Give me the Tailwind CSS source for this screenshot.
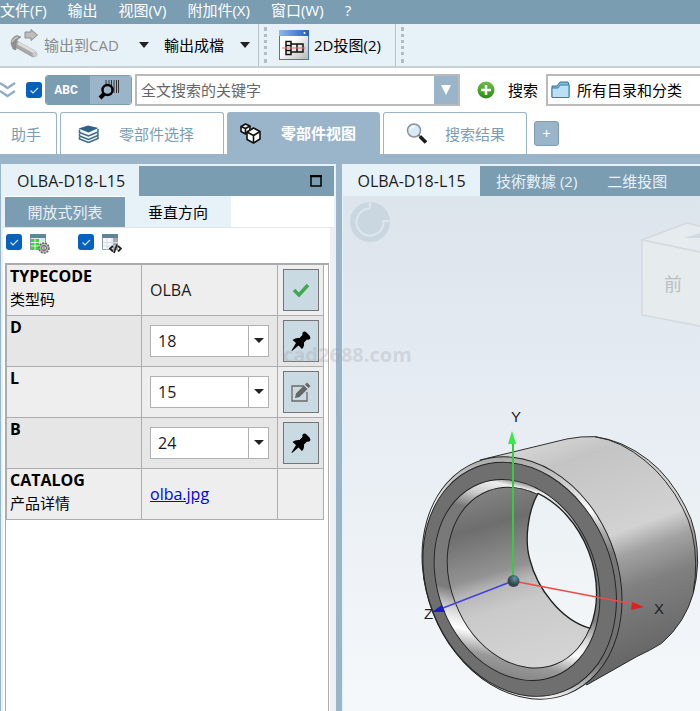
<!DOCTYPE html>
<html lang="zh-CN">
<head>
  <meta charset="UTF-8" />
  <meta name="viewport" content="width=device-width, initial-scale=1.0" />
  <title>OLBA-D18-L15</title>
  <script src="https://cdn.jsdelivr.net/npm/@tailwindcss/browser@4"></script>
</head>
<body class="relative flex min-h-screen flex-col overflow-x-hidden bg-white font-['Open_Sans','Noto_Sans_CJK_SC',sans-serif] text-[15px] leading-5 text-[#1c1c1c]">

  <!-- Menu bar -->
  <nav class="flex h-6 shrink-0 gap-[21px] bg-[#7b9db2] pb-1 whitespace-nowrap text-white">
    <button>文件(F)</button>
    <button>输出</button>
    <button>视图(V)</button>
    <button>附加件(X)</button>
    <button>窗口(W)</button>
    <button>?</button>
  </nav>

  <!-- Toolbar -->
  <div class="flex h-11 shrink-0 items-center border-b-2 border-[#c5d1d5] bg-[#e7f2f8] whitespace-nowrap">
    <button class="flex w-[131px] items-center gap-1 pl-2 text-[#8a8a8a]">
      <svg class="h-8 w-8 shrink-0" viewBox="0 0 32 32">
        <path d="M9 12 L27 22 Q30 24 28 27 Q26 29 23 27 L7 18z" fill="#a9a9a9" stroke="#8c8c8c" stroke-width=".6" />
        <path d="M10 14 L27 23.500" stroke="#dedede" stroke-width="3" />
        <ellipse cx="27" cy="25.500" rx="2.500" ry="2.500" fill="#c9c9c9" />
        <path d="M3 15 Q3 8 9 6.500 L13 8 Q7 11 8 17 L8 21 L5 20z" fill="#8f8f8f" stroke="#858585" stroke-width=".6" />
        <path d="M4 13 Q6 9 10 8" stroke="#c8c8c8" stroke-width="1.500" fill="none" />
        <path d="M17 3h6V.500l6.500 5.500-6.500 5.500V9h-6z" fill="#bdbdbd" stroke="#8d8d8d" />
      </svg>
      输出到CAD
    </button>
    <button class="px-2" aria-label="输出到CAD 选项"><svg class="h-[6px] w-[10px]" viewBox="0 0 10 6"><path d="M0 0h10L5 6z" fill="#222" /></svg></button>
    <button class="pl-[7px] text-black">輸出成檔</button>
    <button class="px-4" aria-label="輸出成檔 選項"><svg class="h-[6px] w-[10px]" viewBox="0 0 10 6"><path d="M0 0h10L5 6z" fill="#222" /></svg></button>
    <div class="-ml-2 h-full border-l border-[#b9c4ca]"></div>
    <div class="ml-[5px] h-9 w-[3px] border-l-[3px] border-dotted border-[#b4bcc1]"></div>
    <button class="ml-3 flex items-center gap-[5px] text-black">
      <svg class="h-[30px] w-[30px]" viewBox="0 0 30 30">
        <defs>
          <linearGradient id="win" x1="0" y1="0" x2="1" y2="1"><stop offset=".4" stop-color="#fff" /><stop offset="1" stop-color="#b5b5b5" /></linearGradient>
          <linearGradient id="bar"><stop offset="0" stop-color="#8fb8ee" /><stop offset="1" stop-color="#1f62c0" /></linearGradient>
        </defs>
        <rect x=".5" y=".5" width="29" height="29" fill="url(#win)" stroke="#4678b8" />
        <rect x="0" y="0" width="30" height="6" fill="url(#bar)" />
        <circle cx="25.500" cy="3" r="1" fill="#fff" />
        <path d="M7 11.500h5v13H7zM7 15.500h5M7 20.500h5M12 14h12v8H12M18 14v8" fill="none" stroke="#111" stroke-width="1.500" />
        <path d="M3 18h23" stroke="#e46a6a" stroke-width="1" />
      </svg>
      <span>2D投图(2)</span>
    </button>
    <div class="ml-[14px] h-full border-l border-[#b9c4ca]"></div>
    <div class="ml-[5px] h-9 w-[3px] border-l-[3px] border-dotted border-[#b4bcc1]"></div>
  </div>

  <!-- Search row -->
  <div class="flex h-11 shrink-0 items-center whitespace-nowrap">
    <button class="w-[26px] shrink-0" aria-label="展开">
      <svg class="h-4 w-4" viewBox="0 0 16 16" fill="none" stroke="#8fb0c6" stroke-width="2.500"><path d="M0 1l7.500 5L15 1M0 9l7.500 5L15 9" /></svg>
    </button>
    <label class="relative h-4 w-4 shrink-0">
      <input type="checkbox" checked aria-label="全文搜索" class="block h-4 w-4 appearance-none rounded-[3px] bg-[#0660bd]" />
      <svg class="pointer-events-none absolute inset-0 h-4 w-4" viewBox="0 0 16 16"><path d="M4.500 8.500l2.500 2.500 5-5" fill="none" stroke="#d5e6f7" stroke-width="1.200" /></svg>
    </label>
    <div class="ml-[3px] flex h-[30px] w-[87px] shrink-0 overflow-hidden rounded-[3px] border border-[#7b9db2]">
      <button class="w-11 bg-[#7b9db2] pr-1 font-['Liberation_Sans_Narrow','Roboto',sans-serif] text-xs font-bold text-white">ABC</button>
      <button class="flex flex-1 items-center justify-center bg-[#9ab4ca] pr-1" aria-label="条码搜索">
        <svg class="h-6 w-6" viewBox="0 0 24 24" fill="none">
          <path d="M9 2v8M12 2v13M14.500 2v13M17 2v13M19.500 2v13M21.500 2v13" stroke="#333" stroke-width="1" />
          <circle cx="10.500" cy="12" r="5" fill="#9ab4ca" stroke="#000" stroke-width="2.500" />
          <path d="M7 16l-4 4" stroke="#000" stroke-width="4" />
        </svg>
      </button>
    </div>
    <div class="ml-[3px] flex h-8 w-[325px] shrink-0 border-2 border-[#bababa]">
      <input type="text" aria-label="全文搜索的关键字" placeholder="全文搜索的关键字" class="min-w-0 flex-1 px-1 text-[#555] placeholder:text-[#666] focus:outline-none" />
      <button class="flex w-6 items-center justify-center bg-[#9ab4ca]" aria-label="历史"><svg class="h-[10px] w-[10px]" viewBox="0 0 10 10"><path d="M0 0h10L5 10z" fill="#fff" /></svg></button>
    </div>
    <button class="ml-[17px] flex shrink-0 items-center gap-[13px] text-black">
      <svg class="h-[18px] w-[18px]" viewBox="0 0 18 18">
        <defs><linearGradient id="plus" x2="0" y2="1"><stop offset="0" stop-color="#6dc04a" /><stop offset="1" stop-color="#2b8a16" /></linearGradient></defs>
        <circle cx="9" cy="9" r="8.500" fill="url(#plus)" /><path d="M9 4v10M4 9h10" stroke="#fff" stroke-width="2.500" />
      </svg>
      搜索
    </button>
    <button class="ml-2 flex h-8 flex-1 items-center gap-[7px] border-2 border-r-0 border-[#bababa] pl-[3px] text-black">
      <svg class="h-[18px] w-[19px] shrink-0" viewBox="0 0 19 18">
        <path d="M1 16V5h5l3-4h8l1 3v12z" fill="#7fbfe0" stroke="#2f7299" />
        <path d="M1 7h6l2-3h9v12.500H1z" fill="#b9e0f3" stroke="#3480a8" />
      </svg>
      所有目录和分类
    </button>
  </div>

  <!-- Main tabs -->
  <div class="flex h-[42px] shrink-0 items-stretch gap-[3px] whitespace-nowrap text-[#7b9db2]">
    <button class="w-[57px] rounded-tr-[3px] border-t border-r border-[#9ab4ca] pr-1">助手</button>
    <button class="flex w-[164px] items-center gap-5 rounded-t-[3px] border border-b-0 border-[#9ab4ca] pl-[17px]">
      <svg class="h-[18px] w-[21px]" viewBox="0 0 21 18">
        <path d="M1.500 4.500v3l9 3.500 9.500-4v-3M1.500 8.500v2.500l9 3.500 9.500-4V8M1.500 12v2l9 3.500 9.500-4v-2" fill="#f2f7fa" stroke="#3e6b87" stroke-width="1.500" />
        <path d="M.500 3.500L10 .500l10.500 2.500-10 4.500z" fill="#2f6284" />
      </svg>
      <span>零部件选择</span>
    </button>
    <button class="flex w-[153px] items-center gap-5 rounded-t-[3px] bg-[#9ab4ca] pl-[13px] font-bold text-white">
      <svg class="h-[21px] w-[21px]" viewBox="0 0 21 21" stroke="#111" stroke-width="1.600" stroke-linejoin="round">
        <path d="M1 3.500L5.500 1 10 3v5l-4.500 3L1 8.500z" fill="#eee" /><path d="M1 3.500l4.500 2L10 3M5.500 5.500V11" fill="none" />
        <path d="M7 9l6.500-4L20 8.500v7.500l-6.500 4L7 16.500z" fill="#fff" /><path d="M7 9l6.500 3.500L20 8.500M13.500 12.500V20" fill="none" />
      </svg>
      <span>零部件视图</span>
    </button>
    <button class="flex w-36 items-center gap-[18px] rounded-t-[3px] border border-b-0 border-[#9ab4ca] pl-[22px]">
      <svg class="h-[21px] w-[21px]" viewBox="0 0 21 21">
        <circle cx="8" cy="7.500" r="6.500" fill="#d6eaf8" stroke="#8d9398" stroke-width="1.500" />
        <path d="M4.500 7a4 4 0 0 1 4-3.500" fill="none" stroke="#fff" stroke-width="1.500" />
        <path d="M12.500 12l2 2" stroke="#777" stroke-width="2" /><path d="M14 13.500l6 6" stroke="#1b1b1b" stroke-width="3.500" />
      </svg>
      <span>搜索结果</span>
    </button>
    <button class="ml-1 flex h-[25px] w-[25px] items-center justify-center self-center rounded-[3px] border border-[#7b9db2] bg-[#9ab4ca] text-white" aria-label="新建标签">+</button>
  </div>

  <!-- Panels -->
  <main class="flex flex-1 gap-[6px] bg-[#9ab4ca] pt-[10px] pl-px">

    <section class="flex w-[335px] shrink-0 flex-col border-x-2 border-t-2 border-[#e7f2f8] bg-white">
      <div class="flex h-[30px] items-stretch bg-[#7b9db2]">
        <h2 class="w-[136px] bg-[#e7f2f8] pl-[14px] text-base leading-[30px]">OLBA-D18-L15</h2>
        <button class="mr-3 ml-auto" aria-label="最大化"><svg class="h-3 w-3" viewBox="0 0 12 12"><path d="M1 1.500h10V11H1z" fill="none" stroke="#000" stroke-width="1.500" /><path d="M0 1h12" stroke="#000" stroke-width="2" /></svg></button>
      </div>
      <div class="flex h-8 border-b border-[#e5e5e5]">
        <button class="mt-px w-[122px] border-l-2 border-[#e7f2f8] bg-[#7b9db2] text-[#e7f2f8]">開放式列表</button>
        <button class="w-[106px] bg-[#e7f2f8] text-black">垂直方向</button>
      </div>

      <div class="flex flex-1 flex-col border-r-4 border-[#f0f0f0]">
        <div class="flex h-[35px] items-start gap-2 pt-[6px] pl-[3px]">
          <label class="relative h-4 w-4">
            <input type="checkbox" checked aria-label="表格设置" class="block h-4 w-4 appearance-none rounded-[3px] bg-[#0660bd]" />
            <svg class="pointer-events-none absolute inset-0 h-4 w-4" viewBox="0 0 16 16"><path d="M4.500 8.500l2.500 2.500 5-5" fill="none" stroke="#d5e6f7" stroke-width="1.200" /></svg>
          </label>
          <svg class="h-5 w-5" viewBox="0 0 20 20">
            <path d="M.500.500h15v15H.500z" fill="#dfe7eb" stroke="#8499a5" /><path d="M0 0h16v4H0z" fill="#5f8598" />
            <path d="M1 5h8v10H1z" fill="#2fdc2f" /><path d="M5 4v12M9.500 4v12M1 8.500h15M1 12h15" stroke="#e6efe6" />
            <circle cx="14" cy="14" r="5" fill="#b5b5b5" stroke="#666" stroke-width="1.500" stroke-dasharray="2 1" /><circle cx="14" cy="14" r="2.500" fill="#ddd" stroke="#666" /><path d="M14 12v4" stroke="#666" />
          </svg>
          <label class="relative ml-5 h-4 w-4">
            <input type="checkbox" checked aria-label="表格代码" class="block h-4 w-4 appearance-none rounded-[3px] bg-[#0660bd]" />
            <svg class="pointer-events-none absolute inset-0 h-4 w-4" viewBox="0 0 16 16"><path d="M4.500 8.500l2.500 2.500 5-5" fill="none" stroke="#d5e6f7" stroke-width="1.200" /></svg>
          </label>
          <svg class="h-5 w-5" viewBox="0 0 20 20">
            <path d="M.500.500h15v15H.500z" fill="#f6fafc" stroke="#8a9ba6" /><path d="M0 0h16v4H0z" fill="#5f8598" />
            <path d="M11 4h4.500v11.500H11z" fill="#aaa" /><path d="M5 4v12M10 4v12M1 8.500h15M1 12h15" stroke="#cfdfe8" />
            <path d="M11 12l-3 2.500 3 3M16 12l3 2.500-3 3M15 10.500l-3 8.500" fill="none" stroke="#222" stroke-width="1.800" />
          </svg>
        </div>

        <div class="mr-px ml-[2px] flex-1 border-2 border-r border-b-0 border-l border-[#ababab]">
          <table class="w-[317px] table-fixed border-collapse text-base">
            <colgroup><col class="w-[135px]" /><col class="w-[136px]" /><col class="w-[46px]" /></colgroup>
            <tbody>
              <tr class="h-[50px] bg-[#eeeeee]">
                <th class="border border-t-0 border-[#adadad] p-0 pl-[3px] text-left align-top text-[15px] leading-[23px] font-bold text-black"><span class="text-base leading-[23px]">TYPECODE</span><br /><span class="font-normal">类型码</span></th>
                <td class="border border-t-0 border-[#adadad] p-0 pl-2">OLBA</td>
                <td class="border border-t-0 border-[#adadad] p-0">
                  <button class="mx-auto flex h-[42px] w-9 items-center justify-center border border-[#757575] bg-[#c9dae3]" aria-label="确定">
                    <svg class="h-4 w-[18px]" viewBox="0 0 18 16"><path d="M2 8l5 5 9-10" fill="none" stroke="#3fa94f" stroke-width="3.500" /></svg>
                  </button>
                </td>
              </tr>
              <tr class="h-[51px] bg-[#e6e6e6]">
                <th class="border border-[#adadad] p-0 pl-[3px] text-left align-top leading-[23px] font-bold text-black"><label for="d">D</label></th>
                <td class="border border-[#adadad] p-0 px-2">
                  <div class="relative">
                    <select id="d" class="block h-8 w-full appearance-none border border-[#b0b0b0] bg-white pl-[7px]"><option>18</option></select>
                    <span class="pointer-events-none absolute inset-y-0 right-0 flex w-[21px] items-center justify-center border border-[#b0b0b0]"><svg class="h-[5px] w-[10px]" viewBox="0 0 10 5"><path d="M0 0h10L5 5z" fill="#222" /></svg></span>
                  </div>
                </td>
                <td class="border border-[#adadad] p-0">
                  <button class="mx-auto flex h-[42px] w-9 items-center justify-center border border-[#757575] bg-[#c9dae3]" aria-label="固定 D">
                    <svg class="h-5 w-5" viewBox="0 0 20 20"><path d="M12 1q2-1 3.500.500l3 3q1.500 2 .500 3.500-1.500 1-3 .500l-3 3q.500 4-2 6.500l-3.500-3.500L1 20l-.500-.500L5 12 1.500 9Q4.500 6.500 8.500 7l3-3Q11 2 12 1z" fill="#000" /></svg>
                  </button>
                </td>
              </tr>
              <tr class="h-[51px] bg-[#eeeeee]">
                <th class="border border-[#adadad] p-0 pl-[3px] text-left align-top leading-[23px] font-bold text-black"><label for="l">L</label></th>
                <td class="border border-[#adadad] p-0 px-2">
                  <div class="relative">
                    <select id="l" class="block h-8 w-full appearance-none border border-[#b0b0b0] bg-white pl-[7px]"><option>15</option></select>
                    <span class="pointer-events-none absolute inset-y-0 right-0 flex w-[21px] items-center justify-center border border-[#b0b0b0]"><svg class="h-[5px] w-[10px]" viewBox="0 0 10 5"><path d="M0 0h10L5 5z" fill="#222" /></svg></span>
                  </div>
                </td>
                <td class="border border-[#adadad] p-0">
                  <button class="mx-auto flex h-[42px] w-9 items-center justify-center border border-[#757575] bg-[#c9dae3]" aria-label="编辑 L">
                    <svg class="h-5 w-5" viewBox="0 0 20 20"><path d="M13 4H1v15h15V10" fill="none" stroke="#6a6a6a" stroke-width="1.300" /><path d="M4 16l1-4.500L13 3.500l3.500 3.500-8 8zM14 2.500L16 .500 19.500 4l-2 2z" fill="#666" /></svg>
                  </button>
                </td>
              </tr>
              <tr class="h-[51px] bg-[#e6e6e6]">
                <th class="border border-[#adadad] p-0 pl-[3px] text-left align-top leading-[23px] font-bold text-black"><label for="b">B</label></th>
                <td class="border border-[#adadad] p-0 px-2">
                  <div class="relative">
                    <select id="b" class="block h-8 w-full appearance-none border border-[#b0b0b0] bg-white pl-[7px]"><option>24</option></select>
                    <span class="pointer-events-none absolute inset-y-0 right-0 flex w-[21px] items-center justify-center border border-[#b0b0b0]"><svg class="h-[5px] w-[10px]" viewBox="0 0 10 5"><path d="M0 0h10L5 5z" fill="#222" /></svg></span>
                  </div>
                </td>
                <td class="border border-[#adadad] p-0">
                  <button class="mx-auto flex h-[42px] w-9 items-center justify-center border border-[#757575] bg-[#c9dae3]" aria-label="固定 B">
                    <svg class="h-5 w-5" viewBox="0 0 20 20"><path d="M12 1q2-1 3.500.500l3 3q1.500 2 .500 3.500-1.500 1-3 .500l-3 3q.500 4-2 6.500l-3.500-3.500L1 20l-.500-.500L5 12 1.500 9Q4.500 6.500 8.500 7l3-3Q11 2 12 1z" fill="#000" /></svg>
                  </button>
                </td>
              </tr>
              <tr class="h-[51px] bg-[#eeeeee]">
                <th class="border border-[#adadad] p-0 pl-[3px] text-left align-top text-[15px] leading-[23px] font-bold text-black"><span class="text-base leading-[23px]">CATALOG</span><br /><span class="font-normal">产品详情</span></th>
                <td class="border border-[#adadad] p-0 pl-2"><a href="#" class="text-[#0000ee] underline">olba.jpg</a></td>
                <td class="border border-[#adadad] p-0"></td>
              </tr>
            </tbody>
          </table>
        </div>
      </div>
    </section>

    <section class="flex min-w-0 flex-1 flex-col border-t-2 border-l border-[#e7f2f8]">
      <div class="flex h-[30px] shrink-0 items-stretch gap-[2px] bg-[#7b9db2] whitespace-nowrap text-[#e7f2f8]">
        <button class="w-[137px] bg-[#e7f2f8] text-base text-[#1c1c1c]">OLBA-D18-L15</button>
        <button class="px-[14px]">技術數據 (2)</button>
        <button class="px-[14px]">二维投图</button>
      </div>

      <!-- 3D view -->
      <svg class="block min-h-[513px] w-full flex-1 bg-linear-to-b from-[#dce4ec] to-[#f5f8fb]" viewBox="343 196 357 515" preserveAspectRatio="xMinYMin slice">
        <defs>
          <linearGradient id="body" gradientUnits="userSpaceOnUse" x1="500" y1="110" x2="740" y2="770">
            <stop offset="0" stop-color="#d2d2d2" /><stop offset=".1" stop-color="#c4c4c4" /><stop offset=".46" stop-color="#d2d2d2" /><stop offset=".56" stop-color="#a2a2a2" /><stop offset=".7" stop-color="#808080" /><stop offset="1" stop-color="#666" />
          </linearGradient>
          <linearGradient id="bore" gradientUnits="userSpaceOnUse" x1="260" y1="260" x2="420" y2="800" gradientTransform="rotate(-68.700) translate(-365 -533)">
            <stop offset="0" stop-color="#848484" /><stop offset=".2" stop-color="#6e6e6e" /><stop offset=".45" stop-color="#929292" /><stop offset=".53" stop-color="#b8b8b8" /><stop offset=".65" stop-color="#cacaca" /><stop offset="1" stop-color="#d4d4d4" />
          </linearGradient>
          <linearGradient id="edge" gradientUnits="userSpaceOnUse" x1="0" y1="170" x2="0" y2="900" gradientTransform="rotate(-68.700) translate(-366 -534)">
            <stop offset="0" stop-color="#a8a8a8" /><stop offset=".12" stop-color="#d0d0d0" /><stop offset=".22" stop-color="#fff" /><stop offset=".3" stop-color="#b5b5b5" /><stop offset=".4" stop-color="#777" /><stop offset=".85" stop-color="#707070" /><stop offset=".94" stop-color="#bbb" /><stop offset="1" stop-color="#fff" />
          </linearGradient>
          <linearGradient id="lip" gradientUnits="userSpaceOnUse" x1="340" y1="240" x2="200" y2="840" gradientTransform="rotate(-68.700) translate(-351 -540)">
            <stop offset="0" stop-color="#8a8a8a" /><stop offset=".03" stop-color="#eee" /><stop offset=".1" stop-color="#ccc" /><stop offset=".18" stop-color="#777" /><stop offset=".58" stop-color="#7c7c7c" /><stop offset=".68" stop-color="#d8d8d8" /><stop offset=".76" stop-color="#fff" /><stop offset=".86" stop-color="#999" /><stop offset="1" stop-color="#777" />
          </linearGradient>
          <linearGradient id="sky" x2="0" y2="1"><stop offset="0" stop-color="#eaf0f4" /><stop offset="1" stop-color="#f3f6f9" /></linearGradient>
          <radialGradient id="ball" cx=".6" cy=".3"><stop offset="0" stop-color="#5d98a0" /><stop offset="1" stop-color="#35454b" /></radialGradient>
        </defs>

        <!-- orbit control -->
        <circle cx="370" cy="222" r="20" fill="#cbd7e0" />
        <path d="M370 208.500a13.500 13.500 0 1 0 13.500 12.500h6M370 208.500v-6" fill="none" stroke="#dde6ed" stroke-width="2" />

        <!-- view cube -->
        <g stroke="#d3d9dd" stroke-width="1.500">
          <path d="M642 240l45-17 40 10v25z" fill="#e6ebef" />
          <path d="M642 240l58 12 30 6v80l-30-12-58-11z" fill="#e6ebee" />
          <path d="M684 238l20-6v6z" fill="#d3dadf" stroke="none" />
        </g>
        <text x="664" y="291" font-size="18" font-family="Noto Sans CJK SC" fill="#b9bfc4">前</text>

        <!-- bushing, drawn at three times its size -->
        <g transform="translate(400 400) scale(.3333)" stroke="#222" stroke-width="2.800" stroke-linejoin="round">
          <path d="M240 180L500 117Q545 108 585 110 627 116 665 132 710 152 745 180 780 207 805 240 835 278 855 318 877 357 885 400 894 445 893 490 891 537 880 580 868 623 845 660 820 700 785 730 750 752 710 770L560 855 300 500z" fill="url(#body)" />
          <path d="M585 110Q627 117 662 134 703 155 735 182 770 210 797 245 827 282 847 322 868 360 877 402 887 445 887 490 888 530 880 575" fill="none" />
          <ellipse rx="374" ry="287" transform="translate(366 534) rotate(68.700)" fill="url(#edge)" />
          <ellipse rx="361" ry="278" transform="translate(359 538) rotate(68.700)" fill="#6f6f6f" />
          <ellipse rx="310" ry="238" transform="translate(351 540) rotate(68.700)" fill="url(#lip)" />
          <ellipse rx="279" ry="213" transform="translate(365 533) rotate(68.700)" fill="url(#bore)" />
          <path d="M414 280C385 330 372 420 390 480 410 560 480 660 570 685A279 213 68.700 0 0 414 280z" fill="url(#sky)" stroke-width="4" />
        </g>

        <!-- axes -->
        <path d="M513 581V442" stroke="#35cc40" stroke-width="2" /><path d="M512 431l4 13h-8z" fill="#3be84a" />
        <path d="M513 581l120 23" stroke="#ee4a4a" stroke-width="1.500" /><path d="M644 607l-13 3 1-8z" fill="#dd2020" />
        <path d="M513 581l-70 27" stroke="#4444dd" stroke-width="1.500" /><path d="M432 612l10-7 3 7z" fill="#1c1ccc" />
        <circle cx="513.500" cy="581" r="6" fill="url(#ball)" />
        <g font-size="15" font-family="Liberation Sans" fill="#222">
          <text x="511" y="422">Y</text>
          <text x="654" y="614">X</text>
          <text x="424" y="619">Z</text>
        </g>
      </svg>
    </section>
  </main>

  <!-- Watermark -->
  <div class="pointer-events-none absolute top-[345px] left-[283px] text-xl leading-5 font-bold text-[#a0a0a8]/30">cad2688.com</div>
</body>
</html>
